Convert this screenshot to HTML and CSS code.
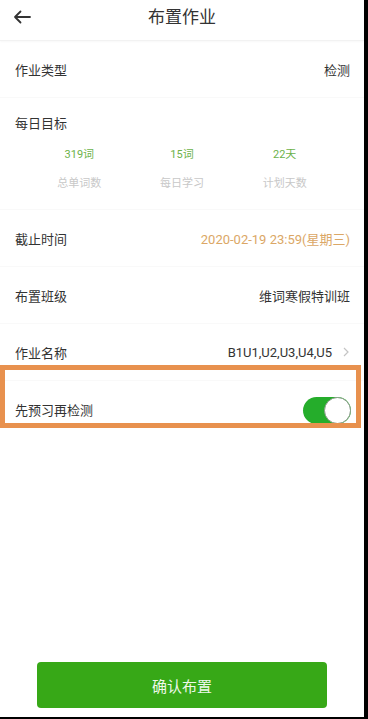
FILE: index.html
```html
<!DOCTYPE html>
<html lang="zh">
<head>
<meta charset="utf-8">
<title>布置作业</title>
<link rel="stylesheet" href="styles.css">
</head>
<body>
<div class="screen">
  <div class="page">
    <header class="header">
      <svg class="back" width="18" height="14" viewBox="0 0 18 14"><path d="M17 7H2M7.5 1.5L2 7l5.5 5.5" fill="none" stroke="#333" stroke-width="1.8" stroke-linecap="round" stroke-linejoin="round"/></svg>
      <div class="title">布置作业</div>
    </header>
    <div class="row first">
      <span class="label">作业类型</span>
      <span class="value">检测</span>
    </div>
    <div class="goal">
      <div class="label">每日目标</div>
      <div class="stats">
        <div class="stat"><div class="num">319词</div><div class="cap">总单词数</div></div>
        <div class="stat"><div class="num">15词</div><div class="cap">每日学习</div></div>
        <div class="stat"><div class="num">22天</div><div class="cap">计划天数</div></div>
      </div>
    </div>
    <div class="row">
      <span class="label">截止时间</span>
      <span class="value date">2020-02-19 23:59(星期三)</span>
    </div>
    <div class="row">
      <span class="label">布置班级</span>
      <span class="value">维词寒假特训班</span>
    </div>
    <div class="row">
      <span class="label">作业名称</span>
      <span class="value link">B1U1,U2,U3,U4,U5<svg class="chev" width="6" height="10" viewBox="0 0 6 10"><path d="M1 1l4 4-4 4" fill="none" stroke="#c4c4c4" stroke-width="1.2"/></svg></span>
    </div>
    <div class="row toggle-row">
      <span class="label">先预习再检测</span>
      <span class="switch"><span class="knob"></span></span>
    </div>
    <div class="highlight"></div>
    <div class="footer">
      <button class="confirm">确认布置</button>
    </div>
  </div>
</div>
</body>
</html>
```
FILE: styles.css
```css
html, body {
  margin: 0;
  padding: 0;
  background: #000;
}
body {
  width: 368px;
  height: 719px;
  font-family: Roboto, "Noto Sans CJK SC", sans-serif;
  color: #333;
}
.screen {
  width: 364px;
  height: 717px;
  background: #fff;
}
.page {
  position: relative;
  height: 717px;
  display: flex;
  flex-direction: column;
}
.header {
  border-bottom: 1px solid #f2f2f2;
  box-shadow: 0 1px 2px rgba(0, 0, 0, 0.03);
  display: flex;
  justify-content: center;
  padding-top: 7px;
  height: 33px;
  position: relative;
}
.back {
  position: absolute;
  left: 13px;
  top: 10px;
}
.title {
  font-size: 17px;
  line-height: 20px;
  color: #333;
}
.row {
  height: 57px;
  box-sizing: border-box;
  border-bottom: 1px solid #f9f9f9;
  display: flex;
  align-items: center;
  justify-content: space-between;
  padding: 0 14px 0 15px;
  font-size: 13px;
}
.label {
  font-size: 13px;
  color: #333;
}
.value {
  font-size: 13px;
  color: #333;
}
.date {
  color: #dba766;
}
.link {
  display: flex;
  align-items: center;
  gap: 11px;
}
.chev {
  margin-right: 1px;
}
.goal {
  height: 112px;
  box-sizing: border-box;
  border-bottom: 1px solid #f9f9f9;
  padding: 17px 0 0 15px;
}
.goal .label {
  line-height: 18px;
}
.stats {
  display: grid;
  grid-template-columns: repeat(3, 1fr);
  margin: 14px 28px 0 13px;
}
.stat {
  text-align: center;
  font-size: 11px;
}
.num {
  line-height: 16px;
  color: #6cb24a;
}
.cap {
  margin-top: 13px;
  line-height: 16px;
  color: #c8c8c8;
}
.toggle-row {
  border-bottom: none;
}
.switch {
  width: 48px;
  height: 27px;
  border-radius: 14px;
  background: #25ad2b;
  position: relative;
  margin-top: 1px;
  margin-right: -1px;
}
.knob {
  position: absolute;
  right: 0;
  top: 0;
  width: 27px;
  height: 27px;
  box-sizing: border-box;
  border-radius: 50%;
  background: #fff;
  border: 1.5px solid #8a9a8a;
}
.highlight {
  position: absolute;
  left: 0;
  top: 365px;
  width: 361px;
  height: 63px;
  box-sizing: border-box;
  border: 5px solid #e8914e;
}
.footer {
  margin-top: auto;
  padding: 0 37px 9px 37px;
}
.confirm {
  display: block;
  width: 290px;
  height: 46px;
  border: none;
  border-radius: 4px;
  background: #37a817;
  color: #eef8ea;
  font-family: Roboto, "Noto Sans CJK SC", sans-serif;
  font-size: 15px;
  padding: 0;
}
```
